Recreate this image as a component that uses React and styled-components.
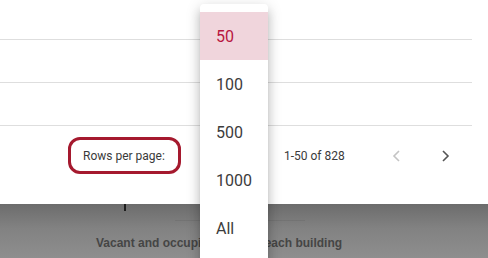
import React from "react";
import styled, { createGlobalStyle } from "styled-components";

const Global = createGlobalStyle`
  html, body { margin: 0; padding: 0; background: #fff; }
  body { font-family: Roboto, "Liberation Sans", Arial, sans-serif; }
`;

const Page = styled.div`
  position: relative;
  width: 488px;
  height: 258px;
  overflow: hidden;
  display: flex;
  flex-direction: column;
`;

const Card = styled.div`
  background: #fff;
  padding-right: 16px;
  display: flex;
  flex-direction: column;
`;

const Row = styled.div`
  height: ${(p) => p.$h}px;
  border-bottom: 1px solid #dedede;
`;

const Footer = styled.div`
  height: 78px;
  box-sizing: border-box;
  padding: 11px 0 0 68px;
  display: flex;
  align-items: flex-start;
  font-size: 12px;
  color: #333;
`;

const RowsLabel = styled.div`
  box-sizing: border-box;
  width: 113px;
  height: 37px;
  border: 3px solid #a5192e;
  border-radius: 12px;
  padding-left: 12px;
  display: flex;
  align-items: center;
  color: #3a3a3a;
`;

const SelectSpace = styled.div`
  width: 103px;
  height: 37px;
`;

const Count = styled.div`
  height: 37px;
  display: flex;
  align-items: center;
  color: #3a3a3a;
  margin-right: 28px;
`;

const NavButton = styled.div`
  width: 48px;
  height: 37px;
  display: flex;
  align-items: center;
  justify-content: center;
  color: ${(p) => (p.$disabled ? "#c4c4c4" : "#555")};
`;

const Scrim = styled.div`
  flex: 1;
  position: relative;
  background: linear-gradient(to bottom, #6c6c6c 0%, #828282 45%, #8e8e8e 100%);
  display: flex;
  flex-direction: column;
  align-items: flex-start;
`;

const Tick = styled.div`
  position: absolute;
  left: 124px;
  top: 0;
  width: 2px;
  height: 7px;
  background: #1e1e1e;
`;

const FaintLine = styled.div`
  position: absolute;
  left: 175px;
  top: 16px;
  width: 130px;
  height: 1px;
  background: rgba(0, 0, 0, 0.06);
`;

const Caption = styled.div`
  margin-top: 32px;
  margin-left: 96px;
  font-family: "Liberation Sans", Arial, sans-serif;
  font-size: 12px;
  font-weight: 700;
  color: #454545;
  white-space: nowrap;
`;

const Menu = styled.div`
  position: absolute;
  left: 200px;
  top: 4px;
  width: 68px;
  height: 270px;
  background: #fff;
  border-radius: 4px;
  padding-top: 8px;
  box-sizing: border-box;
  box-shadow: 0 5px 5px -3px rgba(0, 0, 0, 0.2),
    0 8px 10px 1px rgba(0, 0, 0, 0.14), 0 3px 14px 2px rgba(0, 0, 0, 0.12);
`;

const MenuItem = styled.div`
  height: 48px;
  padding-left: 16px;
  display: flex;
  align-items: center;
  font-size: 16px;
  color: ${(p) => (p.$selected ? "#b8163f" : "#3c3c3c")};
  background: ${(p) => (p.$selected ? "#f0d5dc" : "transparent")};
`;

const Chevron = ({ dir }) => (
  <svg width="10" height="12" viewBox="0 0 10 12" fill="none">
    <polyline
      points={dir === "left" ? "7,1 2,6 7,11" : "3,1 8,6 3,11"}
      stroke="currentColor"
      strokeWidth="1.6"
    />
  </svg>
);

export default function App() {
  return (
    <>
      <Global />
      <Page>
        <Card>
          <Row $h={39} />
          <Row $h={42} />
          <Row $h={42} />
          <Footer>
            <RowsLabel>Rows per page:</RowsLabel>
            <SelectSpace />
            <Count>1-50 of 828</Count>
            <NavButton $disabled>
              <Chevron dir="left" />
            </NavButton>
            <NavButton>
              <Chevron dir="right" />
            </NavButton>
          </Footer>
        </Card>
        <Scrim>
          <Tick />
          <FaintLine />
          <Caption>Vacant and occupied units in each building</Caption>
        </Scrim>
        <Menu>
          <MenuItem $selected>50</MenuItem>
          <MenuItem>100</MenuItem>
          <MenuItem>500</MenuItem>
          <MenuItem>1000</MenuItem>
          <MenuItem>All</MenuItem>
        </Menu>
      </Page>
    </>
  );
}
